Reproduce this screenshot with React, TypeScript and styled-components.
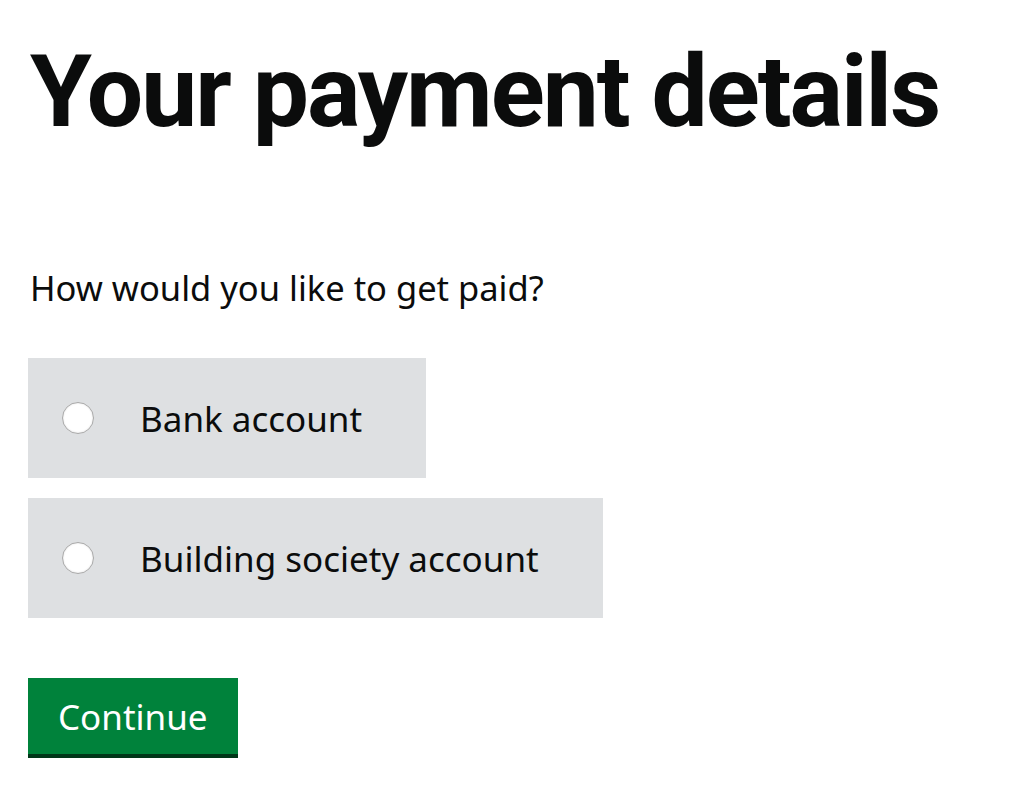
import React from "react";
import styled, { createGlobalStyle } from "styled-components";

const Global = createGlobalStyle`
  html, body { margin: 0; padding: 0; background: #ffffff; }
  body { font-family: "Noto Sans", "Liberation Sans", sans-serif; color: #0b0c0c; }
`;

const Page = styled.main`
  padding: 42px 28px 0 28px;
  display: flex;
  flex-direction: column;
  align-items: flex-start;
`;

const Heading = styled.h1`
  margin: 0 0 0 2px;
  font-family: Roboto, "Noto Sans", sans-serif;
  font-size: 100px;
  line-height: 100px;
  font-weight: 700;
  letter-spacing: -2px;
  white-space: nowrap;
`;

const Fieldset = styled.fieldset`
  border: 0;
  margin: 126px 0 0 0;
  padding: 0;
  display: flex;
  flex-direction: column;
  align-items: flex-start;
  gap: 20px;
`;

const Legend = styled.legend`
  padding: 0 0 0 2px;
  margin-bottom: 50px;
  font-size: 34.5px;
  line-height: 40px;
`;

const Option = styled.label`
  display: flex;
  align-items: center;
  height: 120px;
  box-sizing: border-box;
  padding: 0 64px 0 34px;
  background: #dee0e2;
  gap: 46px;
  font-size: 35px;
  cursor: pointer;
`;

const Radio = styled.span`
  width: 30px;
  height: 30px;
  border-radius: 50%;
  background: #ffffff;
  border: 1px solid #a9a9a9;
  box-shadow: inset 0 0 2px rgba(0,0,0,0.15);
  flex: none;
`;

const Button = styled.button`
  margin-top: 60px;
  height: 80px;
  padding: 0 30px 4px 30px;
  border: 0;
  background: #00823b;
  box-shadow: 0 -4px 0 #003618 inset;
  color: #ffffff;
  font-family: inherit;
  font-size: 35px;
  cursor: pointer;
`;

export default function App() {
  return (
    <>
      <Global />
      <Page>
        <Heading>Your payment details</Heading>
        <Fieldset>
          <Legend>How would you like to get paid?</Legend>
          <Option>
            <Radio />
            Bank account
          </Option>
          <Option>
            <Radio />
            Building society account
          </Option>
        </Fieldset>
        <Button>Continue</Button>
      </Page>
    </>
  );
}
